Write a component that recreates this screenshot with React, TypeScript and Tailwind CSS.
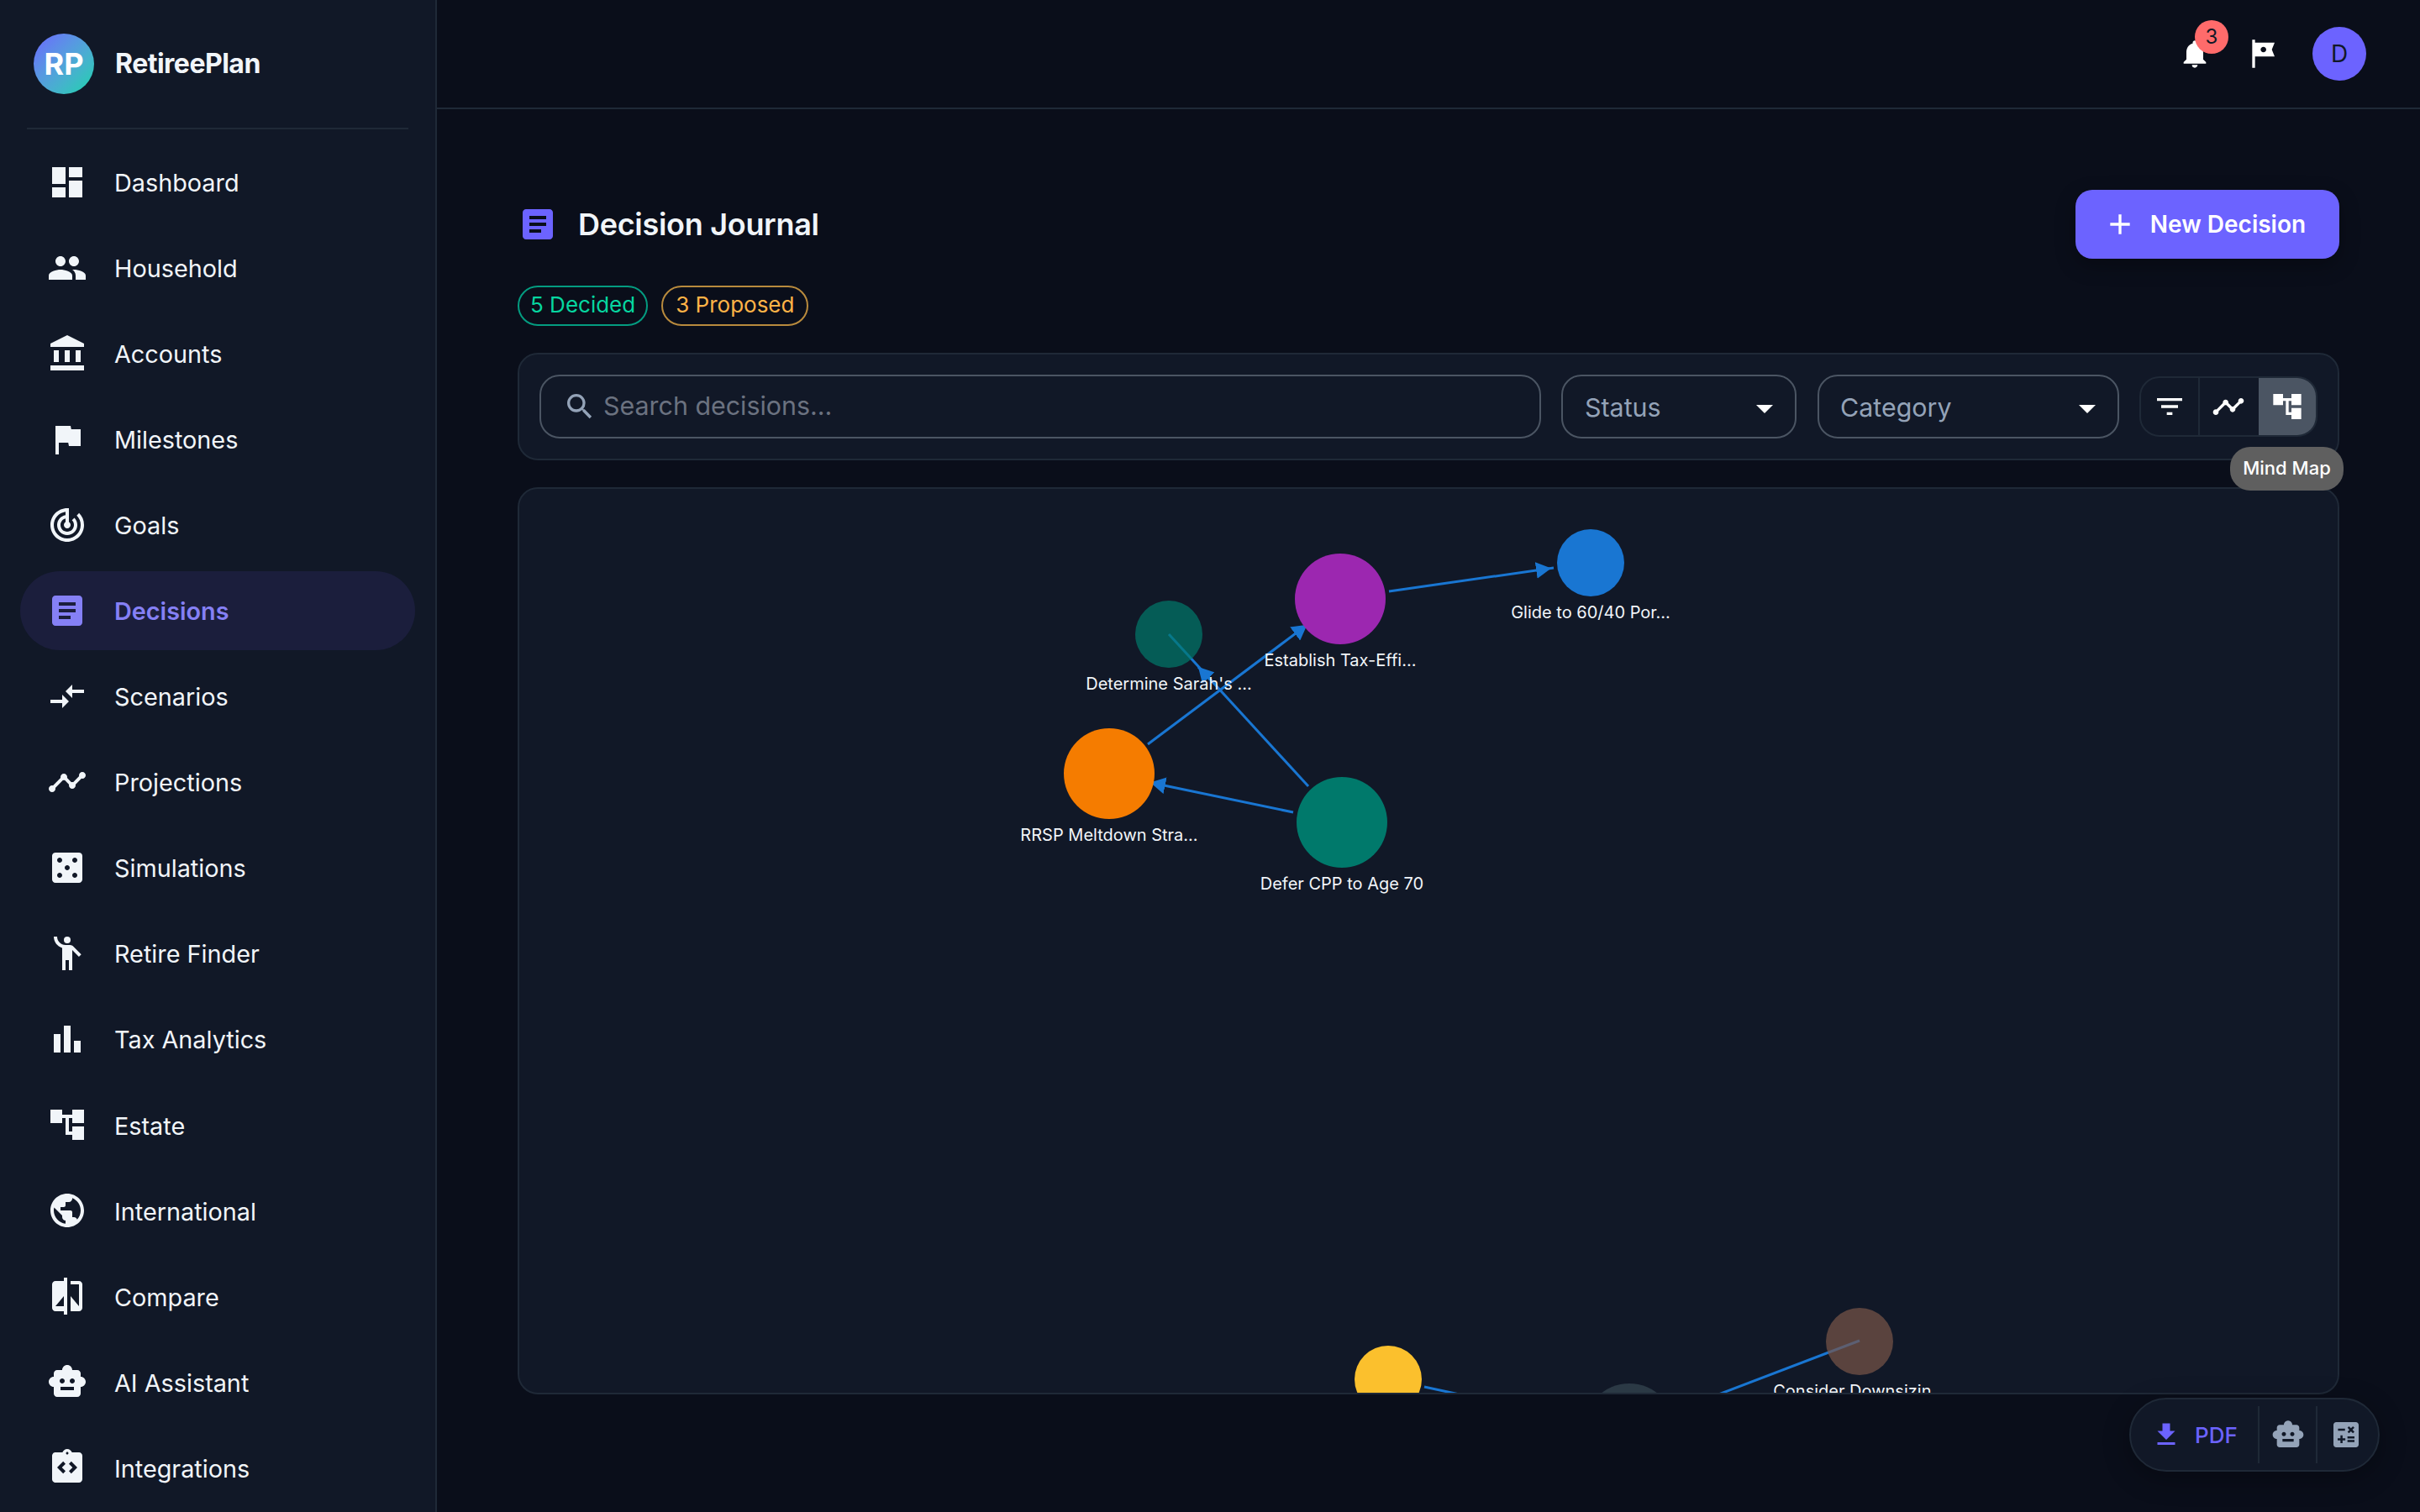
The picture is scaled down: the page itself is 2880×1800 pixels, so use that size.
import type { IconType } from "react-icons";
import {
  MdAccountBalance,
  MdAccountTree,
  MdAdd,
  MdArrowDropDown,
  MdArticle,
  MdBarChart,
  MdCalculate,
  MdCasino,
  MdCompare,
  MdCompareArrows,
  MdDashboard,
  MdEmojiPeople,
  MdFileDownload,
  MdFilterList,
  MdFlag,
  MdIntegrationInstructions,
  MdNotifications,
  MdPeople,
  MdPublic,
  MdSearch,
  MdSmartToy,
  MdTimeline,
  MdTour,
  MdTrackChanges,
} from "react-icons/md";

const navItems: { label: string; icon: IconType; active?: boolean; low?: boolean }[] = [
  { label: "Dashboard", icon: MdDashboard },
  { label: "Household", icon: MdPeople },
  { label: "Accounts", icon: MdAccountBalance },
  { label: "Milestones", icon: MdFlag },
  { label: "Goals", icon: MdTrackChanges },
  { label: "Decisions", icon: MdArticle, active: true },
  { label: "Scenarios", icon: MdCompareArrows },
  { label: "Projections", icon: MdTimeline },
  { label: "Simulations", icon: MdCasino },
  { label: "Retire Finder", icon: MdEmojiPeople },
  { label: "Tax Analytics", icon: MdBarChart },
  { label: "Estate", icon: MdAccountTree, low: true },
  { label: "International", icon: MdPublic, low: true },
  { label: "Compare", icon: MdCompare, low: true },
  { label: "AI Assistant", icon: MdSmartToy, low: true },
  { label: "Integrations", icon: MdIntegrationInstructions, low: true },
];

function Sidebar() {
  return (
    <aside className="flex w-[520px] shrink-0 flex-col overflow-hidden border-r-2 border-[#1f2937] bg-[#111827]">
      <div className="flex h-[152px] shrink-0 items-center gap-[25px] px-[40px]">
        <div className="flex size-[72px] items-center justify-center rounded-full bg-gradient-to-br from-[#6c63ff] to-[#00d4aa] text-[36px] font-bold text-white">
          RP
        </div>
        <span className="text-[32px] font-bold tracking-[-0.5px] text-[#f1f5f9]">
          RetireePlan
        </span>
      </div>
      <div className="mx-[32px] h-[2px] shrink-0 bg-[#1f2937]" />
      <nav className="flex flex-col gap-[8px] px-[24px] pt-[16px]">
        {navItems.map((item) => (
          <div
            key={item.label}
            className={`flex h-[94px] shrink-0 items-center gap-[32px] rounded-[47px] px-[32px] text-[28.8px] ${
              item.active
                ? "bg-[#1b1e3c] font-semibold text-[#8580f5]"
                : "text-[#f1f5f9]"
            }`}
          >
            <item.icon className="size-[48px] shrink-0" />
            <span className={item.low ? "translate-y-[2px]" : "translate-y-[1px]"}>
              {item.label}
            </span>
          </div>
        ))}
      </nav>
    </aside>
  );
}

function Header() {
  return (
    <header className="flex h-[130px] shrink-0 items-center justify-end border-b-2 border-[#1f2937] pr-[64px]">
      <div className="relative mr-[40px] flex">
        <MdNotifications className="size-[40px] text-white" />
        <span className="absolute -top-[20px] left-[20px] flex size-[40px] items-center justify-center rounded-full bg-[#ff6b6b] text-[24px] text-[#111827]">
          3
        </span>
      </div>
      <MdTour className="mr-[40px] size-[40px] text-white" />
      <div className="flex size-[64px] items-center justify-center rounded-full bg-[#6c63ff] text-[28px] text-[#111827]">
        D
      </div>
    </header>
  );
}

function Toolbar() {
  return (
    <div className="relative mt-[32px] flex h-[128px] items-center rounded-[24px] border-2 border-[#1f2937] bg-[#111827] px-[24px]">
      <div className="flex h-[76px] flex-1 items-center rounded-[24px] border-2 border-[#4b5563] pl-[26px] text-[30.4px] text-[#6b7280]">
        <MdSearch className="mr-[8px] size-[40px] text-[#94a3b8]" />
        Search decisions...
      </div>
      <div className="ml-[24px] flex h-[76px] w-[280px] items-center justify-between rounded-[24px] border-2 border-[#4b5563] pl-[26px] pr-[12px] pt-[4px] text-[30.4px] text-[#94a3b8]">
        Status
        <MdArrowDropDown className="size-[48px] text-white" />
      </div>
      <div className="ml-[25px] flex h-[76px] w-[359px] items-center justify-between rounded-[24px] border-2 border-[#4b5563] pl-[25px] pr-[12px] pt-[4px] text-[30.4px] text-[#94a3b8]">
        Category
        <MdArrowDropDown className="size-[48px] text-white" />
      </div>
      <div className="ml-[24px] flex h-[72px] w-[212px] overflow-hidden rounded-[24px] border-2 border-[#1f2937] text-white">
        <div className="flex flex-1 items-center justify-center border-r-2 border-[#1f2937]">
          <MdFilterList className="size-[40px]" />
        </div>
        <div className="flex flex-1 items-center justify-center pr-[2px]">
          <MdTimeline className="size-[40px]" />
        </div>
        <div className="flex flex-1 items-center justify-center bg-[#4b5563]">
          <MdAccountTree className="size-[40px]" />
        </div>
      </div>
      <div className="absolute right-[-7px] top-[110px] z-10 flex h-[52px] w-[135px] items-center justify-center rounded-[24px] bg-[#5f5f5f] pb-[2px] text-[22px] font-medium text-white">
        Mind Map
      </div>
    </div>
  );
}

function MindMap() {
  return (
    <div className="relative mt-[32px] h-[1080px] overflow-hidden rounded-[24px] border-2 border-[#1f2937] bg-[#111827]">
      <svg width={2164} height={1076} viewBox="618 582 2164 1076" className="block">
        <defs>
          <marker
            id="arrow"
            markerUnits="userSpaceOnUse"
            markerWidth={24}
            markerHeight={20}
            refX={21}
            refY={10}
            orient="auto"
          >
            <path d="M0 0L18 10L0 20Z" fill="#1976d2" />
          </marker>
          <marker
            id="arrow-tip"
            markerUnits="userSpaceOnUse"
            markerWidth={18}
            markerHeight={20}
            refX={18}
            refY={10}
            orient="auto"
          >
            <path d="M0 0L18 10L0 20Z" fill="#1976d2" />
          </marker>
        </defs>
        <g stroke="#1976d2" strokeWidth={3}>
          <line x1={1366} y1={886} x2={1558} y2={742} markerEnd="url(#arrow)" />
          <line x1={1653} y1={704} x2={1849} y2={676} markerEnd="url(#arrow)" />
          <line x1={1557} y1={936} x2={1391} y2={755} />
          <line x1={1440} y1={809} x2={1426} y2={794} markerEnd="url(#arrow-tip)" />
          <line x1={1539} y1={967} x2={1366} y2={931} markerEnd="url(#arrow)" />
          <line x1={1695} y1={1651} x2={1760} y2={1665} />
          <line x1={2213} y1={1596} x2={2040} y2={1662} />
        </g>
        <circle cx={1893} cy={670} r={40} fill="#1976d2" />
        <circle cx={1595} cy={713} r={54} fill="#9c27b0" />
        <circle cx={1391} cy={755} r={40} fill="#00796b" opacity={0.7} />
        <circle cx={1320} cy={921} r={54} fill="#f57c00" />
        <circle cx={1597} cy={979} r={54} fill="#00796b" />
        <circle cx={1652} cy={1642} r={40} fill="#fbc02d" />
        <circle cx={1939} cy={1701} r={54} fill="#455a64" opacity={0.5} />
        <circle cx={2213} cy={1597} r={40} fill="#795548" opacity={0.7} />
        <g fill="#f1f5f9" fontSize={20} textAnchor="middle">
          <text x={1893} y={736}>Glide to 60/40 Por...</text>
          <text x={1595} y={793}>Establish Tax-Effi...</text>
          <text x={1391} y={821}>Determine Sarah's ...</text>
          <text x={1320} y={1001}>RRSP Meltdown Stra...</text>
          <text x={1597} y={1059}>Defer CPP to Age 70</text>
          <text x={2213} y={1663}>Consider Downsizin...</text>
        </g>
      </svg>
    </div>
  );
}

function FloatingBar() {
  return (
    <div className="absolute bottom-[48px] right-[48px] flex h-[88px] w-[298px] items-center rounded-[44px] border-2 border-[#1f2937] bg-[#111827] shadow-[0_8px_32px_rgba(0,0,0,0.3)]">
      <div className="flex w-[151px] items-center gap-[16px] pl-[24px] text-[26px] font-medium text-[#6c63ff]">
        <MdFileDownload className="size-[36px]" />
        PDF
      </div>
      <div className="h-[68px] w-[2px] bg-[#1f2937]" />
      <div className="flex w-[67px] justify-center">
        <MdSmartToy className="size-[40px] text-[#94a3b8]" />
      </div>
      <div className="h-[68px] w-[2px] bg-[#1f2937]" />
      <div className="flex flex-1 justify-center pr-[4px]">
        <MdCalculate className="size-[40px] text-[#94a3b8]" />
      </div>
    </div>
  );
}

export default function App() {
  return (
    <div className="relative flex h-screen overflow-hidden bg-[#0a0e1a] font-[family-name:Inter,sans-serif]">
      <Sidebar />
      <main className="flex min-w-0 flex-1 flex-col">
        <Header />
        <div className="px-[96px] pt-[96px]">
          <div className="flex h-[82px] items-center justify-between">
            <div className="flex items-center gap-[24px]">
              <MdArticle className="size-[48px] text-[#6c63ff]" />
              <h1 className="text-[36px] font-semibold tracking-[-0.3px] text-[#f1f5f9]">
                Decision Journal
              </h1>
            </div>
            <button className="flex h-[82px] w-[314px] items-center justify-center gap-[16px] rounded-[20px] bg-[#6c63ff] pr-[7px] text-[28px] font-semibold text-white shadow-[0_8px_24px_rgba(0,0,0,0.3)]">
              <MdAdd className="size-[40px]" />
              New Decision
            </button>
          </div>
          <div className="mt-[32px] flex gap-[16px] text-[26px]">
            <span className="flex h-[48px] items-center rounded-[24px] border-2 border-[#049c80] px-[13px] pb-[3px] text-[#06d6a0]">
              5 Decided
            </span>
            <span className="flex h-[48px] items-center rounded-[24px] border-2 border-[#b88a3d] px-[15px] pb-[3px] text-[#ffb347]">
              3 Proposed
            </span>
          </div>
          <Toolbar />
          <MindMap />
        </div>
      </main>
      <FloatingBar />
    </div>
  );
}
